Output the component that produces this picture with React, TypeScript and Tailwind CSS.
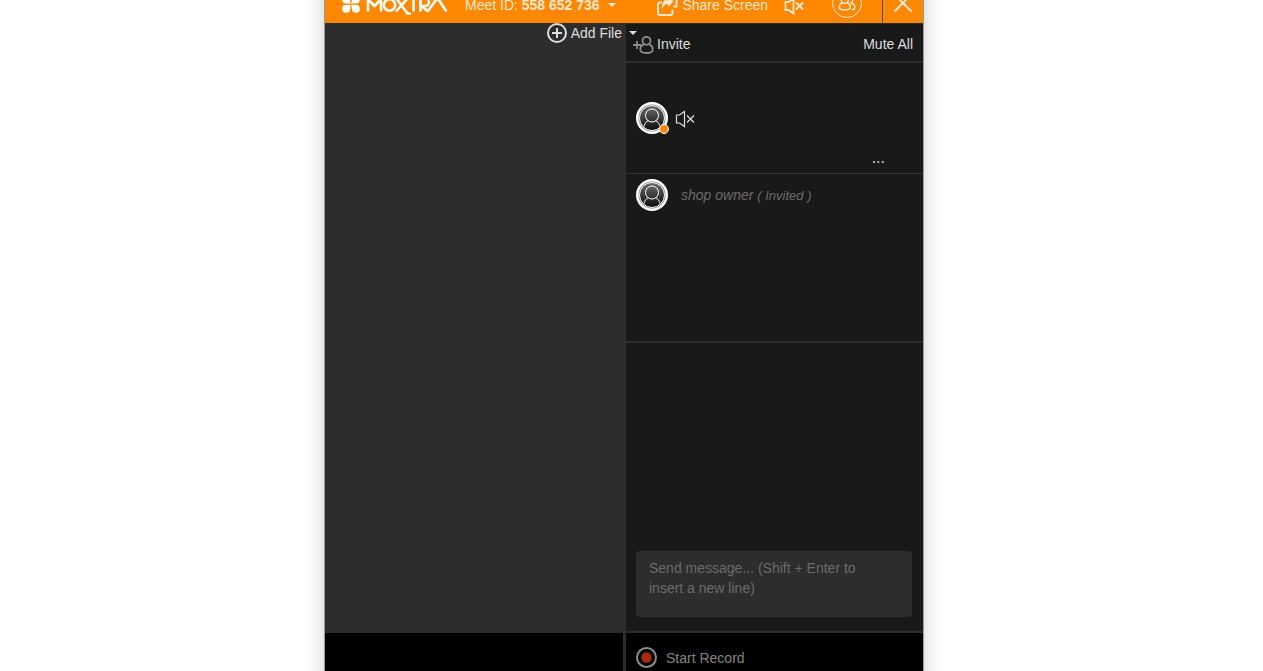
import type { ReactNode } from "react";

function MoxtraLogo() {
  return (
    <svg width="106" height="30" viewBox="0 0 106 30" fill="none" role="img" aria-label="Moxtra">
      <g fill="#fff">
        <circle cx="4.200" cy="11.600" r="4" />
        <circle cx="13.800" cy="11.600" r="4" />
        <circle cx="4.200" cy="20.800" r="4" />
        <circle cx="13.800" cy="20.800" r="4" />
        <path d="M7.500 9.500L8.700 15.800 2.500 15Z" />
        <path d="M10.500 9.500L9.300 15.800 15.500 15Z" />
        <path d="M7.800 22.500L8.700 16.700 4.500 16.900Z" />
        <path d="M10.200 22.500L9.300 16.700 13.500 16.900Z" />
      </g>
      <g stroke="#fff" strokeWidth="2.600" strokeLinejoin="round">
        <path d="M26 23.500V11l6.500 7L39 11v12.500" />
        <circle cx="47.500" cy="17" r="5.700" />
        <path d="M54 10l11.500 15.500H69M66 10L54 23.500" />
        <path d="M62 9.500h14M71.500 9.500v14" />
        <path d="M78.500 23.500V10H83a4 4 0 0 1 0 8h-3.500l6.500 5.500" />
        <path d="M85.500 23.500L95.500 10l9 13.500" />
      </g>
    </svg>
  );
}

function Caret() {
  return <span className="border-x-4 border-t-4 border-x-transparent border-t-current" />;
}

function ShareIcon() {
  return (
    <svg width="21" height="21" viewBox="0 0 21 21" fill="none">
      <path
        d="M5 7.500H3a2 2 0 0 0-2 2V18a2 2 0 0 0 2 2h10.500a2 2 0 0 0 2-2v-3.500"
        stroke="currentColor"
        strokeWidth="2"
      />
      <path d="M11 1l5.500 5.500L11 12V9c-3 0-4.500 1.500-6 5C4.500 8.500 6.500 4.500 11 4Z" fill="currentColor" />
      <path d="M15 1h4.500v10.500h-3" stroke="currentColor" strokeWidth="2" />
    </svg>
  );
}

function SpeakerMutedIcon({ bold = false }: { bold?: boolean }) {
  return (
    <svg
      width="20"
      height="18"
      viewBox="0 0 20 18"
      fill="none"
      stroke="currentColor"
      strokeWidth={bold ? 1.8 : 1.2}
    >
      <path d="M1.500 5v8h3l5 3.500v-15l-5 3.500Z" />
      <path d="M12 5.500l7 7M19 5.500l-7 7" />
    </svg>
  );
}

function PeopleIcon() {
  return (
    <svg width="18" height="18" viewBox="0 0 18 18" fill="none" stroke="currentColor" strokeWidth="1.500">
      <ellipse cx="6.800" cy="5.200" rx="3.700" ry="4.200" />
      <path d="M4.700 8.700C2.500 9.400 1.200 11 1.200 13.300c0 2 1.900 2.700 5.600 2.700s5.600-.7 5.600-2.700c0-2.300-1.300-3.900-3.500-4.600" />
      <path d="M10.800 1.300c2.500-.6 4.200 1.300 4.200 3.700 0 1.700-.7 3-1.900 3.700 2.300.8 3.700 2.400 3.700 4.600 0 1.700-1 2.500-3 2.600" />
    </svg>
  );
}

function InviteIcon() {
  return (
    <svg width="21" height="18" viewBox="0 0 21 18" fill="none" stroke="#8c8c8c" strokeWidth="1.800">
      <path d="M0 9h8M4 5v8" />
      <ellipse cx="13.500" cy="4.800" rx="4" ry="4" />
      <path d="M11.300 8.200C8.700 9 7.300 11 7.300 13.500c0 2.300 2 3.500 6.200 3.500s6.200-1.200 6.200-3.500c0-2.500-1.400-4.500-4-5.300" />
    </svg>
  );
}

function Avatar({ children }: { children?: ReactNode }) {
  return (
    <div className="relative size-8 shrink-0">
      <svg width="32" height="32" viewBox="0 0 32 32" fill="none">
        <defs>
          <linearGradient id="avatar" x1="0" y1="0" x2="0" y2="1">
            <stop offset="0" stopColor="#6e6e6e" />
            <stop offset="1" stopColor="#0a0a0a" />
          </linearGradient>
        </defs>
        <circle cx="16" cy="16" r="16" fill="#fff" />
        <circle cx="16" cy="16" r="13.500" fill="#777" />
        <circle cx="16" cy="16" r="12.500" fill="url(#avatar)" stroke="#fff" />
        <circle cx="16" cy="13.500" r="6.500" stroke="#fff" />
        <path d="M8 24.500c.5-3 2.200-4.900 4.500-5.800M24 24.500c-.5-3-2.200-4.900-4.500-5.800" stroke="#fff" />
      </svg>
      {children}
    </div>
  );
}

function MeetHeader() {
  return (
    <header className="flex h-[63px] items-center bg-[#ff8800] pt-[23px] pl-[17px] text-[#ffe7cc]">
      <MoxtraLogo />
      <button type="button" className="ml-[17px] flex items-center gap-2 pt-1 whitespace-nowrap">
        <span>
          Meet ID: <b>558 652 736</b>
        </span>
        <Caret />
      </button>
      <div className="ml-auto flex h-full items-center">
        <button type="button" className="flex items-center gap-1 pt-1 whitespace-nowrap">
          <ShareIcon />
          Share Screen
        </button>
        <button type="button" aria-label="Mute" className="ml-4 pt-1.5">
          <SpeakerMutedIcon bold />
        </button>
        <button
          type="button"
          aria-label="Participants"
          className="ml-7 flex size-[30px] items-center justify-center rounded-full border border-current"
        >
          <PeopleIcon />
        </button>
        <button
          type="button"
          aria-label="Close"
          className="ml-5 flex h-10 w-[41px] items-center justify-center border-l border-[#4d4d4d]"
        >
          <svg width="20" height="20" viewBox="0 0 20 20" stroke="currentColor" strokeWidth="2">
            <path d="M1.500 1.500l17 17M18.500 1.500l-17 17" />
          </svg>
        </button>
      </div>
    </header>
  );
}

function Stage() {
  return (
    <main className="flex min-w-0 flex-1 flex-col">
      <div className="flex flex-1 items-start justify-end">
        <button
          type="button"
          className="relative z-10 -mr-[11px] flex items-center gap-1 whitespace-nowrap text-[#dedede]"
        >
          <svg width="20" height="20" viewBox="0 0 20 20" fill="none" stroke="currentColor" strokeWidth="2">
            <circle cx="10" cy="10" r="9" />
            <path d="M5 10h10M10 5v10" />
          </svg>
          Add File
          <span className="ml-[3px] flex">
            <Caret />
          </span>
        </button>
      </div>
      <div className="mr-[3px] h-20 bg-black" />
    </main>
  );
}

function Sidebar() {
  return (
    <aside className="flex w-[297px] shrink-0 flex-col border-t border-[#2d2d2d] bg-[#191919]">
      <div className="flex h-[39px] items-center justify-between border-b-2 border-[#2d2d2d] pt-1 pr-2.5 pl-[7px] text-[#dedede]">
        <button type="button" className="flex items-center gap-[3px]">
          <InviteIcon />
          <span className="pb-0.5">Invite</span>
        </button>
        <button type="button" className="pb-0.5">
          Mute All
        </button>
      </div>

      <ul className="h-[280px] border-b-2 border-[#2d2d2d]">
        <li className="flex h-[111px] flex-col border-b border-[#333] pt-[39px] pl-2.5">
          <div className="flex items-center gap-[7px] text-[#dedede]">
            <Avatar>
              <span className="absolute -right-px bottom-0 size-2.5 rounded-full border border-white bg-[#ff8800]" />
            </Avatar>
            <span className="pt-0.5">
              <SpeakerMutedIcon />
            </span>
          </div>
          <button
            type="button"
            aria-label="More options"
            className="mt-3.5 mr-[38px] self-end text-base leading-5 text-[#dedede]"
          >
            ...
          </button>
        </li>
        <li className="flex items-center gap-[13px] pt-[5px] pl-2.5 text-[#6b6b6b] italic">
          <Avatar />
          <span>
            shop owner <span className="text-[13px]">( Invited )</span>
          </span>
        </li>
      </ul>

      <div className="flex flex-1 flex-col justify-end border-b-2 border-[#2d2d2d] px-2.5 pb-3.5">
        <textarea
          aria-label="Message"
          placeholder="Send message... (Shift + Enter to insert a new line)"
          className="h-[66px] w-[276px] resize-none rounded bg-[#2d2d2d] py-[7px] pr-10 pl-[13px] leading-5 text-[#dedede] placeholder:text-[#6b6b6b]"
        />
      </div>

      <div className="h-20 bg-black pt-3.5 pl-2.5">
        <button type="button" className="flex items-center gap-[9px] text-[#828282]">
          <svg width="21" height="21" viewBox="0 0 21 21" fill="none">
            <circle cx="10.500" cy="10.500" r="9.500" stroke="#8c8c8c" strokeWidth="2" />
            <circle cx="10.500" cy="10.500" r="5.200" fill="#aa2a10" />
          </svg>
          Start Record
        </button>
      </div>
    </aside>
  );
}

export default function App() {
  return (
    <div className="h-screen overflow-hidden bg-white pr-[15px] font-['Liberation_Sans',Arial,sans-serif] text-sm">
      <div className="mx-auto -mt-10 flex h-[calc(100vh+82px)] max-w-[600px] flex-col border-x border-[#999] bg-[#2d2d2d] shadow-[0_0_20px_rgba(0,0,0,0.2)]">
        <MeetHeader />
        <div className="flex min-h-0 flex-1">
          <Stage />
          <Sidebar />
        </div>
      </div>
    </div>
  );
}
